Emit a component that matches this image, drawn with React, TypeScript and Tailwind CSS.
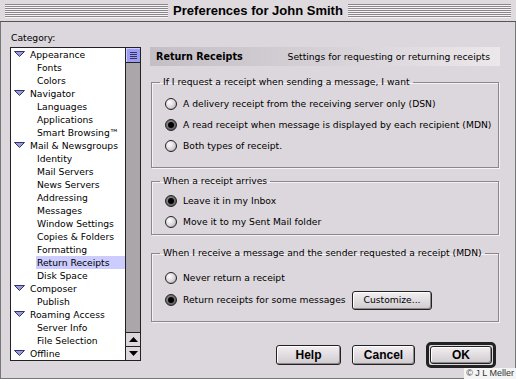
import React from "react";

const tree: { label: string; top?: boolean; sel?: boolean }[] = [
  { label: "Appearance", top: true },
  { label: "Fonts" },
  { label: "Colors" },
  { label: "Navigator", top: true },
  { label: "Languages" },
  { label: "Applications" },
  { label: "Smart Browsing™" },
  { label: "Mail & Newsgroups", top: true },
  { label: "Identity" },
  { label: "Mail Servers" },
  { label: "News Servers" },
  { label: "Addressing" },
  { label: "Messages" },
  { label: "Window Settings" },
  { label: "Copies & Folders" },
  { label: "Formatting" },
  { label: "Return Receipts", sel: true },
  { label: "Disk Space" },
  { label: "Composer", top: true },
  { label: "Publish" },
  { label: "Roaming Access", top: true },
  { label: "Server Info" },
  { label: "File Selection" },
  { label: "Offline", top: true },
];

function Tri() {
  return (
    <svg width="11" height="6" viewBox="0 0 11 6" className="shrink-0">
      <path d="M0.5 0.5 L10.5 0.5 L5.5 5.5 Z" fill="#9a9ae0" stroke="#333366" strokeWidth="1" />
    </svg>
  );
}

function Radio({ on }: { on?: boolean }) {
  return (
    <span
      className={
        "relative flex items-center justify-center w-[12px] h-[12px] rounded-full border border-[#222] shrink-0 " +
        (on
          ? "bg-[radial-gradient(circle_at_40%_40%,#9a969a,#4a464a)]"
          : "bg-[radial-gradient(circle_at_35%_35%,#ffffff,#d8d4d8_55%,#8e8a8e)]")
      }
    >
      {on && <span className="w-[6px] h-[6px] rounded-full bg-black" />}
    </span>
  );
}

function Row({ on, children, h = "h-[21px]" }: { on?: boolean; children: React.ReactNode; h?: string }) {
  return (
    <div className={"flex items-center gap-[6px] whitespace-nowrap " + h}>
      <Radio on={on} />
      <span className="text-[9.2px] text-black leading-none">{children}</span>
    </div>
  );
}

function Btn({ children, w, cls = "" }: { children: React.ReactNode; w: string; cls?: string }) {
  return (
    <div
      className={
        "flex items-center justify-center rounded-[3px] border border-[#222] bg-gradient-to-b from-[#f2eef2] to-[#cfcbcf] shadow-[inset_-1px_-1px_0_#8c888c,inset_1px_1px_0_#ffffff] " +
        w +
        " " +
        cls
      }
    >
      {children}
    </div>
  );
}

export default function App() {
  return (
    <div className="relative w-[516px] h-[379px] overflow-hidden bg-[#dcd7dc] font-['DejaVu_Sans',sans-serif] text-black select-none whitespace-nowrap">
      {/* Title bar */}
      <div className="h-[22px] flex items-center bg-[#dedade] border-b border-[#555] px-[5px] gap-[4px]">
        <div className="flex-1 h-[14px] bg-[repeating-linear-gradient(to_bottom,#8a868a_0px,#8a868a_1px,#f6f4f6_1px,#f6f4f6_2px)]" />
        <div className="px-[1px] text-[13px] font-bold font-['Liberation_Sans',sans-serif] leading-none">
          Preferences for John Smith
        </div>
        <div className="flex-1 h-[14px] bg-[repeating-linear-gradient(to_bottom,#8a868a_0px,#8a868a_1px,#f6f4f6_1px,#f6f4f6_2px)]" />
      </div>

      {/* Body */}
      <div className="flex h-[357px] border-l border-r border-b border-[#777] pl-[9px] pr-[12px] pt-[10px]">
        {/* Left column */}
        <div className="w-[131px] flex flex-col">
          <div className="h-[15px] text-[9.2px] leading-[12px] pl-[1px]">Category:</div>
          <div className="flex h-[314px] border border-[#222] bg-white">
            <div className="flex-1 flex flex-col overflow-hidden">
              {tree.map((t, i) => (
                <div key={i} className="h-[13px] flex items-center">
                  {t.top ? (
                    <div className="flex items-center pl-[3px] gap-[5px]">
                      <Tri />
                      <span className="text-[9.2px] leading-none">{t.label}</span>
                    </div>
                  ) : (
                    <div
                      className={
                        "ml-[25px] flex-1 h-[13px] flex items-center pl-[1px] text-[9.2px] leading-none " +
                        (t.sel ? "bg-[#ccccff]" : "")
                      }
                    >
                      {t.label}
                    </div>
                  )}
                </div>
              ))}
            </div>
            {/* Scrollbar */}
            <div className="w-[15px] border-l border-[#222] flex flex-col bg-[#aaa6aa]">
              <div className="h-[15px] bg-[#9c9cf0] border-b border-[#222] flex flex-col items-center justify-center gap-[1px] shadow-[inset_1px_1px_0_#ccccff]">
                <div className="w-[7px] h-[1px] bg-[#333366]" />
                <div className="w-[7px] h-[1px] bg-[#333366]" />
                <div className="w-[7px] h-[1px] bg-[#333366]" />
                <div className="w-[7px] h-[1px] bg-[#333366]" />
              </div>
              <div className="flex-1" />
              <div className="h-[14px] border-t border-[#222] bg-[#dcd7dc] flex items-center justify-center">
                <svg width="9" height="5" viewBox="0 0 9 5">
                  <path d="M0 5 L4.5 0 L9 5 Z" fill="#000" />
                </svg>
              </div>
              <div className="h-[14px] border-t border-[#222] bg-[#dcd7dc] flex items-center justify-center">
                <svg width="9" height="5" viewBox="0 0 9 5">
                  <path d="M0 0 L4.5 5 L9 0 Z" fill="#000" />
                </svg>
              </div>
            </div>
          </div>
        </div>

        {/* Right column */}
        <div className="ml-[9px] w-[350px] flex flex-col pt-[15px]">
          <div className="h-[19px] flex items-center justify-between pl-[6px] pr-[10px] bg-gradient-to-r from-[#c4bfc4] via-[#d6d1d6] to-[#ebe7eb]">
            <span className="text-[9.6px] font-bold leading-none">Return Receipts</span>
            <span className="text-[9.2px] leading-none">Settings for requesting or returning receipts</span>
          </div>

          <fieldset className="mt-[10px] mx-[1px] border border-[#8a868a] shadow-[inset_1px_1px_0_#f4f2f4,1px_1px_0_#f4f2f4] pb-[11px]">
            <legend className="ml-[8px] px-[3px] text-[9.2px] leading-[12px]">
              If I request a receipt when sending a message, I want
            </legend>
            <div className="pl-[13px] pt-[5px]">
              <Row>A delivery receipt from the receiving server only (DSN)</Row>
              <Row on>A read receipt when message is displayed by each recipient (MDN)</Row>
              <Row>Both types of receipt.</Row>
            </div>
          </fieldset>

          <fieldset className="mt-[7px] mx-[1px] border border-[#8a868a] shadow-[inset_1px_1px_0_#f4f2f4,1px_1px_0_#f4f2f4] pb-[2px]">
            <legend className="ml-[8px] px-[3px] text-[9.2px] leading-[12px]">When a receipt arrives</legend>
            <div className="pl-[13px] pt-[3px]">
              <Row on>Leave it in my Inbox</Row>
              <Row>Move it to my Sent Mail folder</Row>
            </div>
          </fieldset>

          <fieldset className="mt-[12px] mx-[1px] border border-[#8a868a] shadow-[inset_1px_1px_0_#f4f2f4,1px_1px_0_#f4f2f4] pb-[9px]">
            <legend className="ml-[8px] px-[3px] text-[9.2px] leading-[12px]">
              When I receive a message and the sender requested a receipt (MDN)
            </legend>
            <div className="pl-[13px] pt-[8px]">
              <Row>Never return a receipt</Row>
              <div className="flex items-center h-[24px]">
                <div className="w-[187px]">
                  <Row on>Return receipts for some messages</Row>
                </div>
                <Btn w="w-[80px]" cls="h-[19px]">
                  <span className="text-[9.2px] leading-none">Customize...</span>
                </Btn>
              </div>
            </div>
          </fieldset>

          <div className="mt-[20px] flex items-center justify-end gap-[11px] pr-[4px]">
            <Btn w="w-[65px]" cls="h-[20px]">
              <span className="text-[12px] font-bold font-['Liberation_Sans',sans-serif] leading-none">Help</span>
            </Btn>
            <Btn w="w-[63px]" cls="h-[20px]">
              <span className="text-[12px] font-bold font-['Liberation_Sans',sans-serif] leading-none">Cancel</span>
            </Btn>
            <div className="w-[70px] h-[26px] rounded-[5px] border-[3px] border-[#222] flex items-center justify-center bg-[#dcd7dc]">
              <Btn w="w-[62px]" cls="h-[18px]">
                <span className="text-[12px] font-bold font-['Liberation_Sans',sans-serif] leading-none">OK</span>
              </Btn>
            </div>
          </div>
        </div>
      </div>

      <div className="absolute right-0 bottom-0 h-[11px] px-[2px] bg-[#f4f4f4] text-[9px] leading-[11px] text-[#333] font-['Liberation_Sans',sans-serif]">
        © J L Meller
      </div>
    </div>
  );
}
